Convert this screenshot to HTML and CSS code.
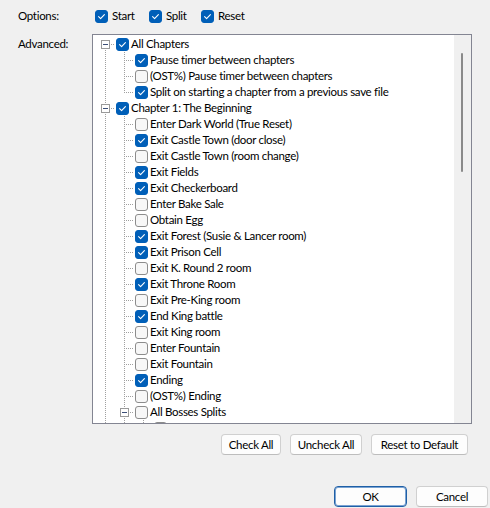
FILE: index.html
```html
<!DOCTYPE html>
<html>
<head>
<meta charset="utf-8">
<link rel="stylesheet" href="styles.css">
</head>
<body>
<div class="dialog">
  <div class="label">Options:</div>
  <div class="opts">
    <label class="opt opt-start"><span class="cb on"><svg viewBox="0 0 13 13"><path d="M3.6 6.7 L5.6 8.6 L9.4 4.6"/></svg></span>Start</label>
    <label class="opt opt-split"><span class="cb on"><svg viewBox="0 0 13 13"><path d="M3.6 6.7 L5.6 8.6 L9.4 4.6"/></svg></span>Split</label>
    <label class="opt"><span class="cb on"><svg viewBox="0 0 13 13"><path d="M3.6 6.7 L5.6 8.6 L9.4 4.6"/></svg></span>Reset</label>
  </div>

  <div class="label label-adv">Advanced:</div>
  <div class="tree">
    <div class="list" id="list"></div>
    <div class="vscroll"><div class="thumb"></div></div>
  </div>

  <div></div>
  <div class="actions">
    <button class="btn w-check">Check All</button>
    <button class="btn w-uncheck">Uncheck All</button>
    <button class="btn w-reset">Reset to Default</button>
  </div>
</div>
<div class="footer">
  <button class="btn btn-default w-ok">OK</button>
  <button class="btn w-cancel">Cancel</button>
</div>
<script src="tree.js"></script>
</body>
</html>
```

FILE: tree.js
```js
// [guides, checked, text, expander]
// guide codes: v = vertical pass-through, t = tee, l = last, r = first root
var rows = [
  ["r", 1, "All Chapters", 1],
  ["vt", 1, "Pause timer between chapters"],
  ["vt", 0, "(OST%) Pause timer between chapters"],
  ["vl", 1, "Split on starting a chapter from a previous save file"],
  ["t", 1, "Chapter 1: The Beginning", 1],
  ["vt", 0, "Enter Dark World (True Reset)"],
  ["vt", 1, "Exit Castle Town (door close)"],
  ["vt", 0, "Exit Castle Town (room change)"],
  ["vt", 1, "Exit Fields"],
  ["vt", 1, "Exit Checkerboard"],
  ["vt", 0, "Enter Bake Sale"],
  ["vt", 0, "Obtain Egg"],
  ["vt", 1, "Exit Forest (Susie & Lancer room)"],
  ["vt", 1, "Exit Prison Cell"],
  ["vt", 0, "Exit K. Round 2 room"],
  ["vt", 1, "Exit Throne Room"],
  ["vt", 0, "Exit Pre-King room"],
  ["vt", 1, "End King battle"],
  ["vt", 0, "Exit King room"],
  ["vt", 0, "Enter Fountain"],
  ["vt", 0, "Exit Fountain"],
  ["vt", 1, "Ending"],
  ["vt", 0, "(OST%) Ending"],
  ["vt", 0, "All Bosses Splits", 1],
  ["vvt", 0, ""]
];
var check = '<svg viewBox="0 0 13 13"><path d="M3.6 6.7 L5.6 8.6 L9.4 4.6"/></svg>';
var html = "";
rows.forEach(function (r) {
  var g = r[0], s = '<div class="node">';
  for (var i = 0; i < g.length; i++) {
    var last = i === g.length - 1;
    s += '<span class="g g-' + g[i] + '">' + (last && r[3] ? '<span class="exp"><span class="minus"></span></span>' : '') + '</span>';
  }
  s += '<span class="cb' + (r[1] ? ' on">' + check : '">') + '</span>';
  if (r[2]) s += '<span class="txt">' + r[2].replace(/&/g, "&amp;") + '</span>';
  s += '</div>';
  html += s;
});
document.getElementById("list").innerHTML = html;
```

FILE: styles.css
```css
html, body {
  margin: 0;
  padding: 0;
  background: #f0f0f0;
}
body {
  width: 490px;
  height: 508px;
  overflow: hidden;
  font-family: Lato, "Liberation Sans", Arial, sans-serif;
  font-size: 11.5px;
  letter-spacing: -0.3px;
  color: #000;
}
.dialog {
  display: grid;
  grid-template-columns: 92px 380px;
  grid-template-rows: 16px 390px 21px;
  row-gap: 10px;
  padding-top: 8px;
}
.label {
  padding-left: 18px;
  line-height: 16px;
}
.label-adv {
  padding-top: 2px;
}
.opts {
  display: flex;
  align-items: center;
  padding-left: 3px;
}
.opt {
  display: flex;
  align-items: center;
  gap: 4px;
  line-height: 16px;
}
.opt-start { width: 54px; }
.opt-split { width: 52px; }

.cb {
  box-sizing: border-box;
  width: 13px;
  height: 13px;
  flex: none;
  border: 1px solid #8c8c8c;
  border-radius: 3px;
  background: #f7f7f7;
  display: block;
}
.cb.on {
  background: #005fb8;
  border-color: #005fb8;
}
.cb svg {
  display: block;
  width: 13px;
  height: 13px;
  margin: -1px;
}
.cb svg path {
  fill: none;
  stroke: #fff;
  stroke-width: 1.1;
  stroke-linecap: round;
  stroke-linejoin: round;
}

.tree {
  box-sizing: border-box;
  border: 1px solid #838592;
  background: #fff;
  display: flex;
  overflow: hidden;
}
.list {
  flex: 1;
  padding: 1px 0 0 3px;
  overflow: hidden;
}
.vscroll {
  width: 17px;
  flex: none;
  background: #f0f0f0;
  padding-top: 18px;
  box-sizing: border-box;
}
.thumb {
  width: 2px;
  height: 119px;
  margin-left: 7px;
  background: #8a8a8a;
  border-radius: 1px;
}

.node {
  display: flex;
  height: 16px;
  white-space: nowrap;
}
.node .cb {
  margin: 2px 0 0 1px;
}
.txt {
  padding-left: 2px;
  line-height: 16px;
}
.g {
  width: 19px;
  height: 16px;
  flex: none;
  display: flex;
  align-items: center;
  justify-content: center;
  background-repeat: no-repeat;
  --dv: repeating-linear-gradient(to bottom, #a0a0a0 0 1px, transparent 1px 2px);
  --dh: repeating-linear-gradient(to right, #a0a0a0 0 1px, transparent 1px 2px);
}
.g-v {
  background-image: var(--dv);
  background-position: 9px 0;
  background-size: 1px 16px;
}
.g-t {
  background-image: var(--dv), var(--dh);
  background-position: 9px 0, 11px 8px;
  background-size: 1px 16px, 9px 1px;
}
.g-l {
  background-image: var(--dv), var(--dh);
  background-position: 9px 0, 11px 8px;
  background-size: 1px 9px, 9px 1px;
}
.g-r {
  background-image: var(--dv), var(--dh);
  background-position: 9px 8px, 11px 8px;
  background-size: 1px 8px, 9px 1px;
}
.exp {
  box-sizing: border-box;
  width: 9px;
  height: 9px;
  border: 1px solid #9a9a9a;
  background: #fff;
  display: flex;
  align-items: center;
  justify-content: center;
}
.minus {
  width: 5px;
  height: 1px;
  background: #3c4f78;
}

.actions {
  display: flex;
  justify-content: flex-end;
  gap: 9px;
  padding-right: 4px;
}
.btn {
  box-sizing: border-box;
  height: 21px;
  padding: 0;
  font-family: inherit;
  font-size: 11.5px;
  letter-spacing: -0.3px;
  color: #000;
  background: #fdfdfd;
  border: 1px solid #d0d0d0;
  border-bottom-color: #bdbdbd;
  border-radius: 4px;
}
.w-check { width: 60px; }
.w-uncheck { width: 72px; }
.w-reset { width: 97px; }
.w-ok { width: 73px; }
.w-cancel { width: 72px; }
.btn-default {
  border: 1px solid #1f5fa6;
  box-shadow: inset 0 0 0 1px #7aa3d2;
}
.footer {
  display: flex;
  justify-content: flex-end;
  gap: 9px;
  padding: 31px 2px 0 0;
}
```
